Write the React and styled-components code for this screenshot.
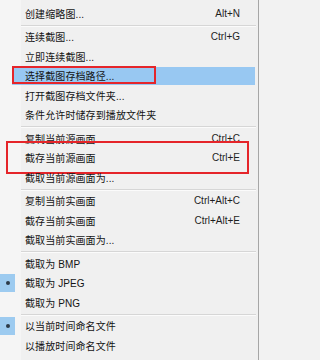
import React from "react";
import styled, { createGlobalStyle } from "styled-components";

const items = [
  { label: "创建缩略图...", key: "Alt+N" },
  "sep",
  { label: "连续截图...", key: "Ctrl+G" },
  { label: "立即连续截图..." },
  { label: "选择截图存档路径...", active: true, mark: "small" },
  { label: "打开截图存档文件夹..." },
  { label: "条件允许时储存到播放文件夹" },
  "sep",
  { label: "复制当前源画面", key: "Ctrl+C" },
  { label: "截存当前源画面", key: "Ctrl+E", mark: "wide" },
  { label: "截取当前源画面为..." },
  "sep",
  { label: "复制当前实画面", key: "Ctrl+Alt+C" },
  { label: "截存当前实画面", key: "Ctrl+Alt+E" },
  { label: "截取当前实画面为..." },
  "sep",
  { label: "截取为 BMP" },
  { label: "截取为 JPEG", checked: true },
  { label: "截取为 PNG" },
  "sep",
  { label: "以当前时间命名文件", checked: true },
  { label: "以播放时间命名文件" },
];

const App = () => (
  <>
    <GlobalStyle />
    <Menu>
      {items.map((item, i) =>
        item === "sep" ? (
          <Separator key={i} />
        ) : (
          <Row key={i}>
            <Check checked={item.checked}>{item.checked && <Dot />}</Check>
            <Body active={item.active}>
              <Label>{item.label}</Label>
              {item.key && <Shortcut>{item.key}</Shortcut>}
            </Body>
            {item.mark && <Mark variant={item.mark} />}
          </Row>
        )
      )}
    </Menu>
  </>
);

const GlobalStyle = createGlobalStyle`
  html, body {
    margin: 0;
    padding: 0;
    background: #f2f2f2;
  }
  body {
    font-family: "Liberation Sans", "Noto Sans CJK SC", sans-serif;
  }
`;

const Menu = styled.div`
  width: 259px;
  height: 360px;
  box-sizing: border-box;
  padding-top: 3.5px;
  display: flex;
  flex-direction: column;
  background: linear-gradient(to right, #f5f5f5 0, #f5f5f5 21px, #f0f0f0 21px);
  border-right: 1px solid #a6a6a6;
  overflow: hidden;
`;

const Row = styled.div`
  position: relative;
  display: flex;
  align-items: center;
  height: 19.5px;
  flex-shrink: 0;
`;

const Check = styled.div`
  width: 15px;
  height: 18px;
  display: flex;
  align-items: center;
  justify-content: center;
  background: ${(p) => (p.checked ? "#9dcbf0" : "transparent")};
`;

const Dot = styled.span`
  width: 4px;
  height: 4px;
  border-radius: 50%;
  background: #2c3a48;
`;

const Body = styled.div`
  flex: 1;
  height: 18px;
  display: flex;
  align-items: center;
  justify-content: space-between;
  margin-left: -3px;
  margin-right: 3px;
  padding: 0 15px 0 13px;
  background: ${(p) => (p.active ? "#98c8f2" : "transparent")};
  font-size: 10px;
  color: #141414;
`;

const Label = styled.span`
  white-space: nowrap;
  letter-spacing: 0.1px;
`;

const Shortcut = styled.span`
  white-space: nowrap;
  color: #1e1e1e;
`;

const Mark = styled.div`
  position: absolute;
  box-sizing: border-box;
  border: 2px solid #e5252a;
  left: ${(p) => (p.variant === "wide" ? "6px" : "12px")};
  width: ${(p) => (p.variant === "wide" ? "243px" : "144px")};
  top: ${(p) => (p.variant === "wide" ? "-7px" : "0")};
  height: ${(p) => (p.variant === "wide" ? "33px" : "18px")};
`;

const Separator = styled.div`
  height: 4px;
  flex-shrink: 0;
  display: flex;
  align-items: center;
  margin: 0 2px 0 21px;

  &::before {
    content: "";
    flex: 1;
    height: 1px;
    background: #d6d6d6;
    box-shadow: 0 1px 0 #fbfbfb;
  }
`;

export default App;
